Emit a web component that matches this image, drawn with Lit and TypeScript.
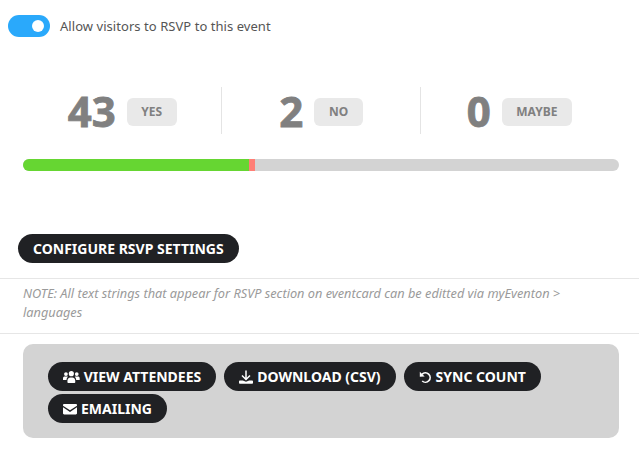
import { LitElement, css, html } from "lit";
import { customElement } from "lit/decorators.js";

const usersIcon = html`<svg class="icon" viewBox="0 0 17 14" width="16.7" height="14"><g fill="currentColor"><circle cx="3" cy="4" r="1.900"/><circle cx="14" cy="4" r="1.900"/><circle cx="8.500" cy="3.600" r="2.600"/><path d="M0 10V8.300C0 7.200.8 6.500 1.800 6.500h2.400c.3 0 .6.100.8.200-.9.800-1.400 1.900-1.400 3.300z"/><path d="M17 10V8.300c0-1.100-.8-1.800-1.800-1.800h-2.400c-.3 0-.6.100-.8.200.9.800 1.400 1.900 1.400 3.300z"/><path d="M4.500 11c0-2 1.300-3.400 3-3.400h2c1.700 0 3 1.400 3 3.400v1c0 .6-.5 1-1 1h-6c-.5 0-1-.4-1-1z"/></g></svg>`;

const downloadIcon = html`<svg class="icon" viewBox="0 0 14 14" width="14" height="14"><path fill="none" stroke="currentColor" stroke-width="1.500" d="M7 .5v8.500M3 5.500 7 9.500l4-4"/><path fill="currentColor" d="M0 11.200c0-.4.400-.8.800-.8h3L7 11.800l3.200-1.400h3c.4 0 .8.400.8.800v1.800c0 .4-.4.800-.8.800H.8c-.4 0-.8-.4-.8-.8z"/></svg>`;

const undoIcon = html`<svg class="icon" viewBox="0 0 13 14" width="13" height="14"><path fill="none" stroke="currentColor" stroke-width="1.700" d="M3 4.300A4.700 4.700 0 1 1 3.200 11"/><path fill="currentColor" d="M.8 1.700 5.700 6.500.8 6.800z"/></svg>`;

const mailIcon = html`<svg class="icon" viewBox="0 0 14 14" width="14" height="14"><g fill="currentColor"><path d="M0 3.200c0-.7.500-1.200 1.200-1.200h11.600c.7 0 1.200.5 1.200 1.200v.5L7 8.300 0 3.700z"/><path d="M0 5.200 7 9.900l7-4.700v6.100c0 .7-.5 1.200-1.200 1.200H1.200c-.7 0-1.200-.5-1.200-1.200z"/></g></svg>`;

@customElement("app-root")
export class AppRoot extends LitElement {
  render() {
    return html`
      <div class="toggle-row">
        <span class="toggle"><span class="knob"></span></span>
        <span class="toggle-label">Allow visitors to RSVP to this event</span>
      </div>

      <div class="stats">
        ${this.stat("43", "YES")} ${this.stat("2", "NO")}
        ${this.stat("0", "MAYBE")}
      </div>

      <div class="bar">
        <span class="yes"></span>
        <span class="no"></span>
      </div>

      <div class="config"><a class="btn">CONFIGURE RSVP SETTINGS</a></div>

      <p class="note">
        NOTE: All text strings that appear for RSVP section on eventcard can be
        editted via myEventon > languages
      </p>

      <div class="actions">
        <a class="btn">${usersIcon}VIEW ATTENDEES</a>
        <a class="btn">${downloadIcon}DOWNLOAD (CSV)</a>
        <a class="btn">${undoIcon}SYNC COUNT</a>
        <a class="btn">${mailIcon}EMAILING</a>
      </div>
    `;
  }

  private stat(count: string, label: string) {
    return html`
      <div class="stat">
        <span class="num">${count}</span>
        <span class="tag">${label}</span>
      </div>
    `;
  }

  static styles = css`
    :host {
      display: block;
      width: 639px;
      height: 456px;
      overflow: hidden;
      background: #fff;
      font-family: "Noto Sans", sans-serif;
    }

    .toggle-row {
      display: flex;
      align-items: center;
      gap: 10px;
      padding: 15px 8px 0;
    }
    .toggle {
      display: flex;
      align-items: center;
      justify-content: flex-end;
      width: 42px;
      height: 22px;
      padding-right: 6px;
      box-sizing: border-box;
      border-radius: 11px;
      background: #2aa9fb;
    }
    .knob {
      width: 12px;
      height: 12px;
      border-radius: 50%;
      background: #fff;
    }
    .toggle-label {
      font-size: 13px;
      color: #555;
      line-height: 22px;
      letter-spacing: 0.05px;
    }

    .stats {
      display: grid;
      grid-template-columns: repeat(3, 1fr);
      margin: 50px 21px 0 23px;
    }
    .stat {
      display: flex;
      align-items: center;
      justify-content: center;
      gap: 11px;
      height: 47px;
      border-left: 1px solid #e4e4e4;
    }
    .stat:first-child {
      border-left: 0;
    }
    .num {
      font-family: "Noto Sans", sans-serif;
      font-size: 42px;
      font-weight: 700;
      color: #808080;
      -webkit-text-stroke: 0.8px #808080;
      line-height: 47px;
    }
    .tag {
      display: flex;
      align-items: center;
      justify-content: center;
      height: 28px;
      margin-top: 2px;
      padding: 0 14.5px;
      border-radius: 6px;
      background: #e9e9e9;
      font-size: 12px;
      font-weight: 700;
      color: #808080;
    }

    .bar {
      display: flex;
      height: 12px;
      margin: 25px 20px 0 23px;
      border-radius: 6px;
      overflow: hidden;
      background: #d3d3d3;
    }
    .yes {
      width: 226px;
      background: #66d632;
    }
    .no {
      width: 6px;
      background: #ff7f76;
    }

    .btn {
      display: inline-flex;
      align-items: center;
      gap: 4px;
      height: 29px;
      padding: 0 15px;
      box-sizing: border-box;
      border-radius: 15px;
      background: #202124;
      color: #fff;
      font-size: 14px;
      font-weight: 700;
      white-space: nowrap;
    }
    .icon {
      flex: none;
    }

    .config {
      display: flex;
      margin: 63px 0 0 18px;
    }

    .note {
      margin: 15px 0 0;
      padding: 5px 50px 11px 23px;
      border-top: 1px solid #e6e6e6;
      border-bottom: 1px solid #e6e6e6;
      font-size: 12.75px;
      font-style: italic;
      line-height: 19px;
      color: #9a9a9a;
    }

    .actions {
      display: flex;
      flex-wrap: wrap;
      gap: 3px 8px;
      margin: 10px 20px 0 23px;
      padding: 18px 25px 15px;
      border-radius: 10px;
      background: #d3d3d3;
    }
  `;
}

declare global {
  interface HTMLElementTagNameMap {
    "app-root": AppRoot;
  }
}
